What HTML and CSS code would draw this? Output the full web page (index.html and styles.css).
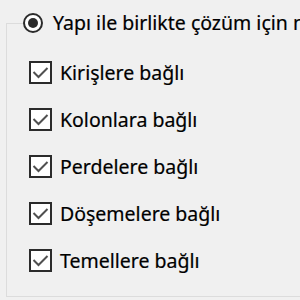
FILE: index.html
```html
<!DOCTYPE html>
<html lang="tr">
<head>
<meta charset="utf-8">
<link rel="stylesheet" href="styles.css">
</head>
<body>
<fieldset class="group">
  <legend class="legend">
    <span class="radio"><span class="radio-dot"></span></span>
    <span class="label">Yapı ile birlikte çözüm için m</span>
  </legend>
  <div class="list">
    <div class="row"><span class="box"><svg viewBox="0 0 19 19" width="19" height="19"><polyline points="2.5,9 7.5,14 16.5,5" fill="none" stroke="#505050" stroke-width="2"/></svg></span><span class="label">Kirişlere bağlı</span></div>
    <div class="row"><span class="box"><svg viewBox="0 0 19 19" width="19" height="19"><polyline points="2.5,9 7.5,14 16.5,5" fill="none" stroke="#505050" stroke-width="2"/></svg></span><span class="label">Kolonlara bağlı</span></div>
    <div class="row"><span class="box"><svg viewBox="0 0 19 19" width="19" height="19"><polyline points="2.5,9 7.5,14 16.5,5" fill="none" stroke="#505050" stroke-width="2"/></svg></span><span class="label">Perdelere bağlı</span></div>
    <div class="row"><span class="box"><svg viewBox="0 0 19 19" width="19" height="19"><polyline points="2.5,9 7.5,14 16.5,5" fill="none" stroke="#505050" stroke-width="2"/></svg></span><span class="label">Döşemelere bağlı</span></div>
    <div class="row"><span class="box"><svg viewBox="0 0 19 19" width="19" height="19"><polyline points="2.5,9 7.5,14 16.5,5" fill="none" stroke="#505050" stroke-width="2"/></svg></span><span class="label">Temellere bağlı</span></div>
  </div>
</fieldset>
</body>
</html>
```
FILE: styles.css
```css
html, body {
  margin: 0;
  padding: 0;
  background: #f0f0f0;
  width: 300px;
  height: 300px;
  overflow: hidden;
  font-family: "Noto Sans", "Open Sans", sans-serif;
  font-size: 19.5px;
  color: #000;
}
.group {
  box-sizing: border-box;
  margin: 9px 0 0 6px;
  padding: 0 0 0 22px;
  width: 340px;
  height: 288px;
  border: 1px solid #dcdcdc;
  min-width: 0;
}
.legend {
  display: flex;
  align-items: center;
  gap: 10px;
  height: 28px;
  padding: 0 4px 0 0;
  margin-left: -6px;
  white-space: nowrap;
}
.radio {
  box-sizing: border-box;
  width: 20px;
  height: 20px;
  border: 2px solid #2b2b2b;
  border-radius: 50%;
  background: #fff;
  display: flex;
  align-items: center;
  justify-content: center;
}
.radio-dot {
  width: 10px;
  height: 10px;
  border-radius: 50%;
  background: #2b2b2b;
}
.label {
  line-height: 24px;
  white-space: nowrap;
  -webkit-text-stroke: 0.2px #000;
}
.list {
  display: flex;
  flex-direction: column;
  padding-top: 12px;
}
.row {
  display: flex;
  align-items: center;
  gap: 8px;
  height: 47px;
}
.box {
  box-sizing: border-box;
  width: 23px;
  height: 23px;
  border: 2px solid #2b2b2b;
  background: #fff;
  display: flex;
  align-items: center;
  justify-content: center;
}
.box svg {
  display: block;
}
```
